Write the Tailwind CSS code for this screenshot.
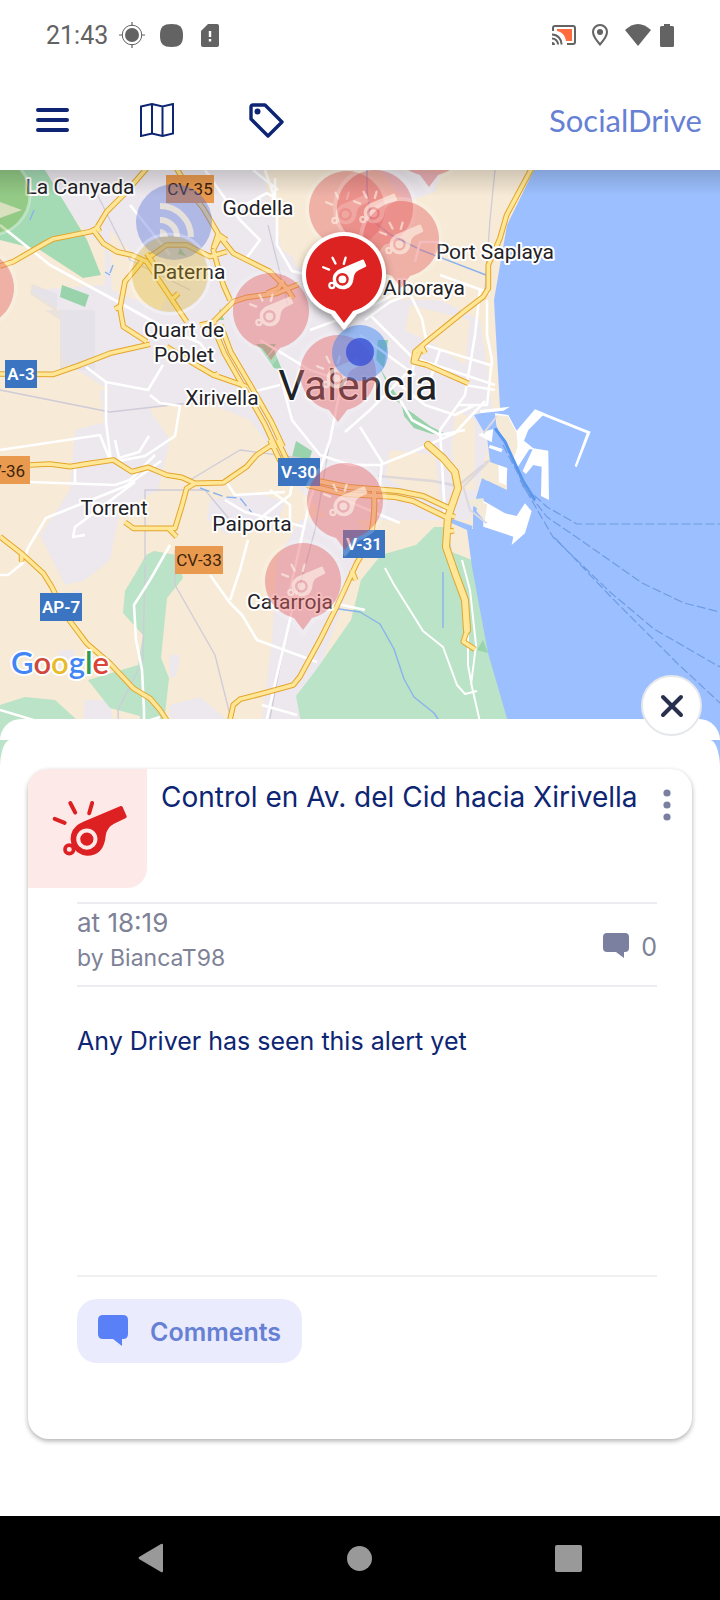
<!DOCTYPE html>
<html lang="en">
<head>
<meta charset="utf-8">
<meta name="viewport" content="width=device-width, initial-scale=1">
<title>SocialDrive</title>
<script src="https://cdn.jsdelivr.net/npm/@tailwindcss/browser@4"></script>
</head>
<body class="bg-white font-['Inter',sans-serif]">
<div class="flex min-h-screen flex-col bg-white">

  <!-- Status bar -->
  <div class="flex h-[70px] items-center justify-between pr-[46px] pl-[46px] text-[#636363]">
    <div class="flex items-center">
      <span class="w-[73px] pt-[2px] font-['Roboto',sans-serif] text-[25px]">21:43</span>
      <svg class="size-[26px]" viewBox="0 0 26 26" fill="none" stroke="currentColor"><circle cx="13" cy="13" r="7" fill="currentColor" stroke="none"/><circle cx="13" cy="13" r="9.8"/><path d="M13 0v4M13 22v4M0 13h4M22 13h4" stroke-width="1.2"/></svg>
      <svg class="ml-[15px] size-[23px]" viewBox="0 0 23 23" fill="currentColor"><path d="M11.5 0C20 0 23 3 23 11.500S20 23 11.500 23 0 20 0 11.500 3 0 11.500 0z"/></svg>
      <svg class="ml-[18px] h-[23px] w-[18px]" viewBox="0 0 18 23"><path d="M7 0h9a2 2 0 0 1 2 2v19a2 2 0 0 1-2 2H2a2 2 0 0 1-2-2V7z" fill="currentColor"/><path d="M9 7v6M9 15v2.500" stroke="#fff" stroke-width="2.400"/></svg>
    </div>
    <div class="flex items-center">
      <svg class="h-5 w-6" viewBox="0 0 24 20" fill="none" stroke="currentColor" stroke-width="2"><path d="M5 4h15v12h-6C13 10 10 7 5 6z" fill="#ff6c3e" stroke="none"/><path d="M1 6V3a2 2 0 0 1 2-2h18a2 2 0 0 1 2 2v14a2 2 0 0 1-2 2h-6M0 9.500A9.500 9.500 0 0 1 9.500 19.500M0 13.500a6 6 0 0 1 6 6"/><path d="M0 17a3 3 0 0 1 3 3H0z" fill="currentColor" stroke="none"/></svg>
      <svg class="ml-4 h-[22px] w-4" viewBox="0 0 16 22"><path d="M8 1a7 7 0 0 1 7 7c0 4.500-7 12.500-7 12.500S1 12.500 1 8a7 7 0 0 1 7-7z" fill="none" stroke="currentColor" stroke-width="2"/><circle cx="8" cy="8" r="3" fill="currentColor"/></svg>
      <svg class="ml-[17px] h-[22px] w-[26px]" viewBox="0 0 26 22" fill="currentColor"><path d="M0 6Q13-6 26 6L13 22z"/></svg>
      <svg class="ml-[9px] h-[23px] w-[14px]" viewBox="0 0 14 23" fill="currentColor"><path d="M4 0h6v2h2.500q1.500 0 1.500 1.500v18q0 1.500-1.500 1.500h-11Q0 23 0 21.500v-18Q0 2 1.500 2H4z"/></svg>
    </div>
  </div>

  <!-- App bar -->
  <header class="flex h-[100px] items-center justify-between pr-[18px] pl-9 text-[#0d2573]">
    <div class="flex items-center">
      <button type="button" aria-label="Menu"><svg class="block h-6 w-[33px]" viewBox="0 0 33 24" fill="none" stroke="currentColor" stroke-width="4" stroke-linecap="round"><path d="M2 2h29M2 12h29M2 22h29"/></svg></button>
      <button type="button" aria-label="Map" class="ml-[71px]"><svg class="block h-[34px] w-[34px]" viewBox="0 0 34 34" fill="none" stroke="currentColor" stroke-width="2"><path d="M1 3.500 12 1l10.500 2.500L33 1v29.500L22.500 33 12 30.500 1 33zM12 1v29.500M22.500 3.500V33"/></svg></button>
      <button type="button" aria-label="Tags" class="ml-[75px]"><svg class="block size-[35px]" viewBox="0 0 35 35"><path d="M4 2h12L33 19 19 33 2 16V4q0-2 2-2z" fill="none" stroke="currentColor" stroke-width="3.400" stroke-linejoin="round"/><circle cx="8.500" cy="8.500" r="3" fill="currentColor"/></svg></button>
    </div>
    <a href="#" class="font-['Lato',sans-serif] text-[31px] text-[#6680d4]">SocialDrive</a>
  </header>

  <!-- Map -->
  <main class="flex flex-1 flex-col">
  <svg class="block w-full" viewBox="0 170 720 600" role="img" aria-label="Map of Valencia" fill="none" stroke-linejoin="round">
    <defs>
      <linearGradient id="fade" x1="0" y1="0" x2="0" y2="1"><stop offset="0" stop-opacity=".16"/><stop offset="1" stop-opacity="0"/></linearGradient>
      <filter id="soft" x="-30%" y="-30%" width="160%" height="170%"><feDropShadow dx="0" dy="4" stdDeviation="4" flood-opacity=".4"/></filter>
      <symbol id="whistle" viewBox="155 300 232 172">
        <g fill="none" stroke="currentColor" stroke-linecap="round"><path stroke-width="12" d="M166 357l30 12M213 309l15 29M279 309l-9 31"/><circle cx="210" cy="449" r="13" stroke-width="11"/></g>
        <path fill="currentColor" fill-rule="evenodd" d="M365 318q4-1 6 3l12 27q1 4-2 6l-36 18q-21 11-25 35-5 61-57 61a51 51 0 0 1-31-90q6-6 22-13zM263 386a32 32 0 1 0 0 64 32 32 0 0 0 0-64zM263 398a20 20 0 1 1 0 40 20 20 0 0 1 0-40z"/>
      </symbol>
      <g id="pinbase"><path d="M-13 40A42 42 0 1 1 13 40L0 56z" fill="#fff"/><path d="M-9 37A38 38 0 1 1 9 37L0 49z" fill="#dd2123"/></g>
      <g id="pin"><use href="#pinbase"/><use href="#whistle" x="-23" y="-19" width="46" height="36" color="#fff"/></g>
      <g id="ghost"><path d="M-13 40A42 42 0 1 1 13 40L0 56z" fill="#fff" opacity=".2"/><path d="M-9 37A38 38 0 1 1 9 37L0 49z" fill="#dc282a" opacity=".31"/><use href="#whistle" x="-23" y="-19" width="46" height="36" color="#fff5ea" opacity=".6"/></g>
      <!-- Motorways, grouped by map tile -->
      <g id="motorways">
        <g transform="translate(0 165) scale(.3333)">
          <path d="M0 303 40 290 135 235 160 222 270 200 290 190 320 140 375 85 440 10M280 195l30 40 40 25 45 10 45 20 40 60 40 60 40 60M600 480l50-10M640 470l60-60 40-13 90-12 65-27M530 10l40 70 40 50 50 85 40 50 60 30 50 25 50 50 20 30M660 215l-20 40 15 55 15 50 20 45M800 385l35-15 15-25M450 275l50-35h60l70 35 50-15M440 265l20 30M425 290l-50 60-15 80 10 55 70 45M500 545l80 50 60 35 100 35M0 627l160 1 80-28 90-35 120-27M345 432l15-8M520 400l15-15M640 635l15-10M298 200l-8-20M650 205l30 20M640 250l15-45"/>
          <path d="M638 480l35 85 60 105 60 105 35 75M662 480l30 80 62 105 60 105 35 75"/>
        </g>
        <g transform="translate(360 165) scale(.3333)"><path d="M515 10 440 150 420 220 385 300v70l-15 25-65 50-105 85-35 30-5 30 40 10 125 55M165 590l20-45 10 20"/></g>
        <g transform="translate(360 440) scale(.3333)"><path d="M320 575l-10 30 35 23M265 225l20 5M262 275l20-3"/></g>
        <g transform="translate(0 440) scale(.3333)"><path d="M90 75l60-3 60 8 60-10 70-10 55 35 50-13 55 23 45 7 40 18 85-2 70-48 30-35 45-30M585 130l-25 15-15 55-20 65H400l-25-18M505 265l25 25M0 290l70 55 60 55 25 40 45 90 60 80 70 60 70 75 50 30 30 35 20 30M690 840l10-45 20-17 70-18 90-25 20-25 60-110 50-100 60-130 30-50M65 340v25M1055 390l12 30M810 0l34 70M832 0l34 70"/></g>
      </g>
      <path id="coastroad" d="M428 445l15 13 12 14 3 16-10 29-2 30 9 26 10 27 2 30"/>
      <g id="southroads"><path d="M307 485l38 9 50 3 18 4 37 18M318 481l30 6 50 4 25 5 30 14M366 548q10-20 8-58M368 489h12"/></g>
    </defs>
    <rect y="170" width="720" height="600" fill="#f7ead6"/>

    <!-- Built-up areas -->
    <g fill="#ece8ee">
      <path d="M38 170H170L262 170 282 250 310 268 344 238 370 300 440 300 480 320 494 420 470 520 330 520 300 490 288 470 250 420 200 400 140 410 62 360 60 310 30 290 105 285 105 250 60 205z"/>
      <path d="M300 520l55-8 10 30-50 140-20 88h-45l12-50 10-80 5-80zM75 430l75-20 20 30-12 50-38 20-10 50-25 20-20 5-25-50 30-45zM210 500l45-8 30 10-10 28-50 4-18-15zM100 390l50 5 0 25-45 8zM380 170l60 2-5 20-30 10zM40 600l40-10-5 20-30 5zM85 700l25 0 10 70H80zM170 705l30-8 30 25v48h-60zM60 650l15 0 0 15-18 0zM170 655l10 0-4 22-6 0z"/>
    </g>
    <path fill="#f7ead6" d="M110 230l60 60-10 20-48-20zM290 170h60v85l-35 20-20-10-10-50zM410 305l60 15-5 45-30-20-30-15zM390 450l45 5 5 45-30-8-25-15zM455 410l20 10 0 70-18 0-5-40z"/>
    <path fill="#dedbe4" d="M32 284l25 10 0 18-27-18zM45 310h50v60H60V320z" opacity=".5"/>

    <!-- Parks and fields -->
    <g fill="#bae3c7">
      <path d="M296 696l20-26 35-50 10-40 20-25 35-10 18-18h14l4 25 20 8 3 15 8 45 10 40 18 60 10 50H310z"/>
      <path d="M146 555l8-4 22 4 7 23-16 20-6 60 8 20-10 90h-15l-4-52-30-8-22-28 50-15 5-30-20-22 2-22 12-20zM0 705l25-8 30 3 22 20 3 50H0z"/>
      <path d="M25 170l20 0 42 70 14 35-18 3L40 250 0 240v-70z" fill="#a4dab4"/>
    </g>
    <g fill="#98d3ab"><path d="M62 285l27 10-4 12-25-10zM256 344l20 0-10 14 8-8 8 20-8-2-14-20zM296 441l16 10-4 14-16-8zM378 340l10 0-4 28-8-8zM380 368l16 26 6 6 0 4-8-4zM402 406l12 8 16 12 18 9-16-1-18-6-10-12zM180 248l6 8-8-2zM220 308l4 12-6 0zM483 640l5 13-11-3z"/></g>

    <!-- Railways and canals -->
    <g stroke="#cfcbd9" stroke-width="1.300">
      <path d="M0 390l110 22 70-8 80-2M95 190l35 70 60 30M145 560l0-70 60 0 25 30M175 550v35l40 70 15 60v55M120 770l-2-60 25-50 2-95M330 440l-15 90-30 110-25 130M190 480l50-30 60 8M495 170l-5 50-5 70M268 225l20 80"/>
      <path d="M378 476l55 5 25 5 30-25" stroke-width="2.500" opacity=".6"/>
    </g>
    <g stroke="#8ab2ee" stroke-width="1.400"><path d="M367 170v20l4 30 20 15 30 15 65 25M443 572v56M325 607l35 5 20 12 14 25 10 30 10 18 20 16 8 12M110 273l3-8M105 272l5 3M30 220l4-10"/><path stroke-dasharray="10 4" d="M200 488l25 9 15 1 12 15"/></g>

    <!-- Sea -->
    <path fill="#9cc0ff" d="M534 170H720V770H522L488 653 472 567 467 530 445 520 473 529V508L482 478 507 490V468L490 462 487 437 474 415 500 408 494 300 507 225z"/>
    <path stroke="#9cc0ff" stroke-width="4" d="M446 519l26 9"/>
    <g transform="translate(250 370) scale(.3333)">
      <path fill="#f0ead9" d="M640 390l60-5 15 60-40-35z"/>
      <path fill="#fff" d="M735 130l40 5 25 47 55-64 30 12-50 50-13 32 28 23 45 7 2 148-24-12 2-88-25-5-22 27-10-9 30-65h-10l-35 54-63-127zM880 128l142 57-42 107-6-4 36-98-134-54zM700 392l65 38 35 8 25-38 20 24-20 66-40 35 5-25-90-30zM745 285l27 10-4 50-22-8zM700 185l30-8-5 40-40-22zM720 225l38 12-4 10-38-14zM690 120l90-10-20 12-70 8z"/>
      <path fill="#f5ead8" d="M738 135l36 4 26 50 3 40-13 40-50-100z"/>
      <path fill="#f5ead8" d="M690 395l22 8-8 50-25-30zM700 280l45 8 1 50-42-8z"/>
      <path stroke="#dcd9df" stroke-width="6" d="M700 190l40-50M640 350l50-50 30-30M640 350l20 70 50 40"/>
      <path stroke="#5596ee" stroke-width="9" d="M735 175l30 40 55 120 35 55"/>
    </g>
    <g stroke="#6f9be3" stroke-width="1.200" stroke-dasharray="9 3">
      <path d="M503 445l22 42 22 20 30 17h143M522 485l25 32 25 17 70 49 42 20 36 9M520 480l33 57 57 55 44 37 66 38M555 538l57 60 35 35 30 30 43 40"/>
    </g>

    <!-- Streets -->
    <g stroke="#fff" stroke-width="2.600">
      <path d="M0 225l50 40 70 38 45 25 35 15 15 20M130 205l40 50M205 170l35 50 20 20-15 20M265 170l12 35 0 40 15 26 40 10M245 205l22-12 8 5 0-20M253 170l25 20M163 365l-15 25-42-8-20-15M106 382l0 40 5 40M0 450l100-15 10 25M150 395l10 8 20 3-5 30-30 20-32 6M75 468v15M30 482l85 3 15-5 25-25M0 575h8l15-12 5-15 18-30 30-12 50-20 35-25M85 535l-12 2 2-10 60-45M115 440l4 18 20-6 10-16M170 545l-20 35-16 25 2 35 6 30 2 40v60M210 575l20 28 12 12 15 25 60 22M248 540l-8 30-10 30M225 480l10 15 50-3M225 500l20 12 60 15M140 770l-5-45 25-8M0 710l60 18M245 530l45-35 5-25"/>
      <path d="M255 770l22-95 20-85M285 720l-15 50M262 705l35 10M290 590l20-90 20-60 12-60M280 375l12 45 28 35 30 10 30 0 30-12 45-20 30-32M345 432l25-22 40-40M360 427l22 35-4 40M360 335l55 40M310 330l55-20 45-25M370 315l35 35 10 10-5 20M365 320l25-18 20-8 12 25 5 25M420 360l75 25M425 345l65 20M480 290l-5 45-10 60-25 35 5 85M487 300l0 35 5 25-5 45-30 0M465 385l30 5M440 350l-10 30M400 385l25 20 30 10 20-10M400 400l12 20 28 15 25-5M435 255l5-13-20 0-5 20M440 275l50 18M310 300l30 10M220 400l60-15M260 340l50 30 30 10"/>
      <path d="M385 568l8 15 30 48 20 16 14 38 8 9 12-3M468 630v35l4 22 8 35 3 48M462 560l8 30 6 55-5 40" stroke-width="2"/>
      <path d="M340 498l60 25M320 600l45 10M270 490l20 15 0 20"/>
    </g>

    <use href="#motorways" stroke="#e3a52c" stroke-width="17"/>
    <use href="#coastroad" stroke="#e3a52c" stroke-width="8" stroke-linecap="round"/>
    <use href="#southroads" stroke="#e3a52c" stroke-width="6"/>
    <use href="#motorways" stroke="#ffe797" stroke-width="11"/>
    <use href="#coastroad" stroke="#ffe797" stroke-width="6" stroke-linecap="round"/>
    <use href="#southroads" stroke="#ffe797" stroke-width="4"/>

    <!-- Place names -->
    <g font-family="Roboto, sans-serif" font-size="21" fill="#1f2226" stroke="#fff" stroke-width="4" paint-order="stroke" text-anchor="middle">
      <text x="80" y="194">La Canyada</text><text x="258" y="215">Godella</text><text x="189" y="279">Paterna</text>
      <text x="184" y="337">Quart de</text><text x="184" y="362">Poblet</text><text x="222" y="405">Xirivella</text>
      <text x="495" y="259">Port Saplaya</text><text x="424" y="295">Alboraya</text><text x="114" y="515">Torrent</text>
      <text x="252" y="531">Paiporta</text><text x="290" y="609">Catarroja</text>
      <text x="358" y="400" font-size="42" stroke-width="3">Valencia</text>
    </g>
    <g font-family="Roboto, sans-serif" font-size="17" text-anchor="middle">
      <path fill="#e99a4e" d="M166 175h48v28h-48zM0 456h30v28H0zM175 546h48v28h-48z"/>
      <path fill="#3b74c1" d="M5 360h32v28H5zM278 458h42v28h-42zM343 530h42v28h-42zM40 593h42v28H40z"/>
      <g fill="#40240c"><text x="190" y="195">CV-35</text><text x="25" y="477" text-anchor="end">V-36</text><text x="199" y="566">CV-33</text></g>
      <g fill="#fff" font-weight="600"><text x="21" y="380">A-3</text><text x="299" y="478">V-30</text><text x="364" y="550">V-31</text><text x="61" y="613">AP-7</text></g>
    </g>

    <!-- Faded alerts -->
    <g opacity=".5"><circle cx="-10" cy="195" r="40" fill="#7cb342" opacity=".8"/><circle cx="-10" cy="195" r="40" stroke="#fff" stroke-width="3" opacity=".6"/></g>
    <path d="M0 202l22 8-22 8z" fill="#f7ead6" opacity=".7"/>
    <circle cx="174" cy="222" r="38" fill="#4e68d8" opacity=".38"/>
    <g stroke="#f3ead8" stroke-width="6" opacity=".8"><path d="M160 206a31 31 0 0 1 31 31M160 220a17 17 0 0 1 17 17"/></g><path d="M160 229a8 8 0 0 1 8 8h-8z" fill="#f3ead8" opacity=".7"/>
    <circle cx="170" cy="274" r="38" fill="#dcb020" opacity=".32"/><circle cx="170" cy="274" r="40" stroke="#fff" stroke-width="3" opacity=".3"/>
    <use href="#ghost" x="-24" y="288"/>
    <use href="#ghost" x="429" y="138"/>
    <use href="#ghost" x="347" y="209"/><use href="#ghost" x="375" y="208"/><use href="#ghost" x="401" y="239"/>
    <use href="#ghost" x="271" y="311"/><use href="#ghost" x="338" y="373"/><use href="#ghost" x="345" y="501"/><use href="#ghost" x="303" y="581"/>
    <!-- Current position -->
    <circle cx="360" cy="353" r="28" fill="#4285f4" opacity=".5"/><circle cx="360" cy="352" r="14" fill="#3b50d4" opacity=".8"/>
    <!-- Selected alert -->
    <g filter="url(#soft)"><use href="#pin" x="344" y="274"/></g>

    <g font-family="Lato, sans-serif" font-size="31" font-weight="600" stroke="#fff" stroke-width="4" paint-order="stroke"><text x="11" y="674"><tspan fill="#4285f4">G</tspan><tspan fill="#cf4a3c">o</tspan><tspan fill="#e8bb2d">o</tspan><tspan fill="#4285f4">g</tspan><tspan fill="#2f9a51">l</tspan><tspan fill="#db4437">e</tspan></text></g>
    <rect y="170" width="720" height="26" fill="url(#fade)"/>
  </svg>

  <!-- Bottom sheet -->
  <section class="relative -mt-[51px] flex flex-1 flex-col">
    <div class="h-[21px] rounded-t-[21px] bg-white"></div>
    <button type="button" aria-label="Close" class="absolute -top-11 right-[18px] flex size-[61px] items-center justify-center rounded-full border-2 border-gray-200 bg-white text-[#27304d]"><svg class="size-6" viewBox="0 0 24 24" fill="none" stroke="currentColor" stroke-width="4" stroke-linecap="round"><path d="M3 3l18 18M21 3 3 21"/></svg></button>
    <div class="flex-1 bg-white px-7 pt-[29px] pb-[77px] [border-radius:10px_10px_0_0/28px_28px_0_0]">
      <article class="flex h-full min-h-[670px] flex-col rounded-[21px] bg-white shadow-[0_2px_5px_rgba(0,0,0,0.32)]">
        <div class="flex items-start">
          <div class="flex size-[119px] shrink-0 items-center justify-center rounded-tl-[20px] rounded-br-[20px] bg-[#fee9e9] pl-1 text-[#dd2123]"><svg class="h-[57px] w-[77px]" aria-hidden="true"><use href="#whistle"/></svg></div>
          <h1 class="ml-[14px] flex-1 pt-2 text-[28px] leading-10 text-[#0d2573]">Control en Av. del Cid hacia Xirivella</h1>
          <button type="button" aria-label="More options" class="mt-5 mr-[21px] text-[#7b80a0]"><svg class="block h-8 w-2" viewBox="0 0 8 32" fill="currentColor"><circle cx="4" cy="4" r="3.600"/><circle cx="4" cy="16" r="3.600"/><circle cx="4" cy="28" r="3.600"/></svg></button>
        </div>
        <div class="mr-[35px] ml-[49px] flex flex-1 flex-col">
          <div class="mt-[14px] flex items-center justify-between border-y-2 border-[#ececf1] pb-[10px] text-[#7d8297]">
            <div><p class="pt-[1px] text-[26px] leading-9">at 18:19</p><p class="text-[23px] leading-[34px]">by BiancaT98</p></div>
            <div class="flex items-center gap-3 pt-4"><svg class="mb-1 h-[26px] w-[26px] text-[#7b80a0]" viewBox="0 0 26 26" fill="currentColor"><path d="M4 0h18q4 0 4 4v11q0 4-4 4h-1v6l-8-6H4q-4 0-4-4V4q0-4 4-4z"/></svg><span class="text-[25px]">0</span></div>
          </div>
          <p class="mt-[36px] text-[25px] leading-9 text-[#0d2573]">Any Driver has seen this alert yet</p>
          <div class="mt-auto border-t-2 border-[#efefef] pt-[22px] pb-[76px]">
            <button type="button" class="flex h-16 w-[225px] items-center rounded-[20px] bg-[#eaebfd] pt-[3px] pl-[21px] text-[25px] font-semibold text-[#6680d4]"><svg class="mr-[22px] mb-[5px] h-[31px] w-[30px] text-[#5a80f8]" viewBox="0 0 30 31" fill="currentColor"><path d="M5 0h20q5 0 5 5v14q0 5-5 5h-1v7l-9-7H5q-5 0-5-5V5q0-5 5-5z"/></svg>Comments</button>
          </div>
        </div>
      </article>
    </div>
  </section>
  </main>

  <!-- System navigation -->
  <nav class="flex h-[84px] items-center justify-between bg-black px-[138px] text-[#999]">
    <button type="button" aria-label="Back"><svg class="block h-[30px] w-[25px]" viewBox="0 0 25 30" fill="currentColor"><path d="M23 1q2-1 2 1v26q0 2-2 1L1 16q-1-1 0-2z"/></svg></button>
    <button type="button" aria-label="Home" class="size-[25px] rounded-full bg-[#999]"></button>
    <button type="button" aria-label="Recents" class="size-[27px] rounded-[2px] bg-[#999]"></button>
  </nav>
</div>
</body>
</html>
